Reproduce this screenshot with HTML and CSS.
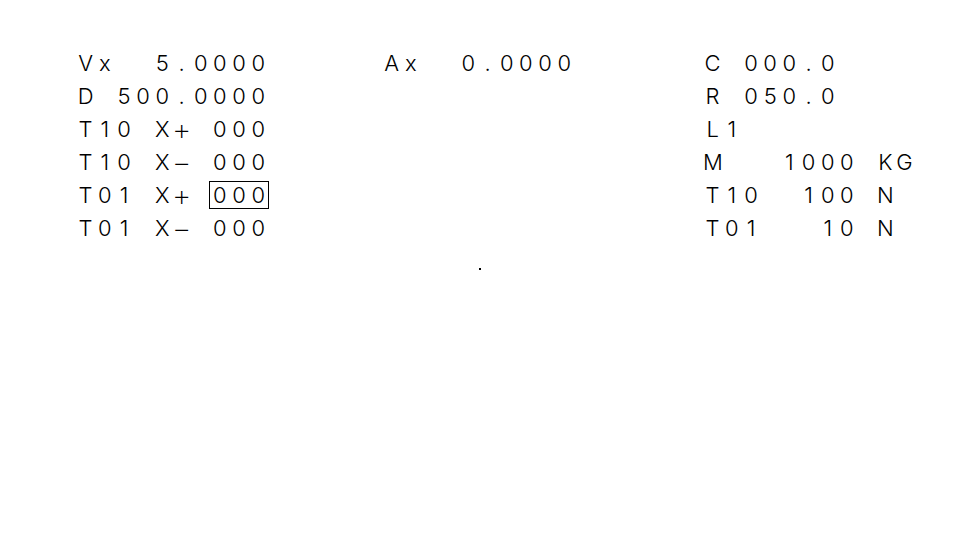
FILE: index.html
```html
<!DOCTYPE html>
<html lang="en">
<head>
<meta charset="utf-8">
<title>Display</title>
<link rel="stylesheet" href="styles.css">
</head>
<body>
<main class="screen">
  <section class="col">
    <div class="row"><span>V</span><span>x</span><span></span><span></span><span>5</span><span>.</span><span>0</span><span>0</span><span>0</span><span>0</span></div>
    <div class="row"><span>D</span><span></span><span>5</span><span>0</span><span>0</span><span>.</span><span>0</span><span>0</span><span>0</span><span>0</span></div>
    <div class="row"><span>T</span><span>1</span><span>0</span><span></span><span>X</span><span class="op">+</span><span></span><span>0</span><span>0</span><span>0</span></div>
    <div class="row"><span>T</span><span>1</span><span>0</span><span></span><span>X</span><span class="op">−</span><span></span><span>0</span><span>0</span><span>0</span></div>
    <div class="row"><span>T</span><span>0</span><span>1</span><span></span><span>X</span><span class="op">+</span><span></span><em class="sel"><span>0</span><span>0</span><span>0</span></em></div>
    <div class="row"><span>T</span><span>0</span><span>1</span><span></span><span>X</span><span class="op">−</span><span></span><span>0</span><span>0</span><span>0</span></div>
  </section>
  <section class="col">
    <div class="row"><span>A</span><span>x</span><span></span><span></span><span>0</span><span>.</span><span>0</span><span>0</span><span>0</span><span>0</span></div>
    <div class="dot"></div>
  </section>
  <section class="col">
    <div class="row"><span>C</span><span></span><span>0</span><span>0</span><span>0</span><span>.</span><span>0</span></div>
    <div class="row"><span>R</span><span></span><span>0</span><span>5</span><span>0</span><span>.</span><span>0</span></div>
    <div class="row"><span>L</span><span>1</span></div>
    <div class="row"><span>M</span><span></span><span></span><span></span><span>1</span><span>0</span><span>0</span><span>0</span><span></span><span>K</span><span>G</span></div>
    <div class="row"><span>T</span><span>1</span><span>0</span><span></span><span></span><span>1</span><span>0</span><span>0</span><span></span><span>N</span></div>
    <div class="row"><span>T</span><span>0</span><span>1</span><span></span><span></span><span></span><span>1</span><span>0</span><span></span><span>N</span></div>
  </section>
</main>
</body>
</html>
```
FILE: styles.css
```css
html, body {
  margin: 0;
  background: #ffffff;
}

body {
  color: #000000;
  font-family: Inter, "DejaVu Sans", sans-serif;
  font-weight: 300;
  font-size: 22px;
}

.screen {
  display: grid;
  grid-template-columns: 306px 321px 1fr;
  align-items: start;
  padding: 47px 0 0 76px;
}

.row {
  display: flex;
  height: 33px;
  line-height: 33px;
}

.row span {
  flex: none;
  width: 19.2px;
  text-align: center;
}

.row .op {
  font-size: 30px;
  font-weight: 200;
}

.sel {
  display: flex;
  position: relative;
  font-style: normal;
}

.sel::after {
  content: "";
  position: absolute;
  top: 2px;
  bottom: 3px;
  left: -1px;
  right: -1px;
  border: 1px solid #000000;
}

.dot {
  width: 2px;
  height: 2px;
  margin: 188px 0 0 97px;
  background: #000000;
}
```
